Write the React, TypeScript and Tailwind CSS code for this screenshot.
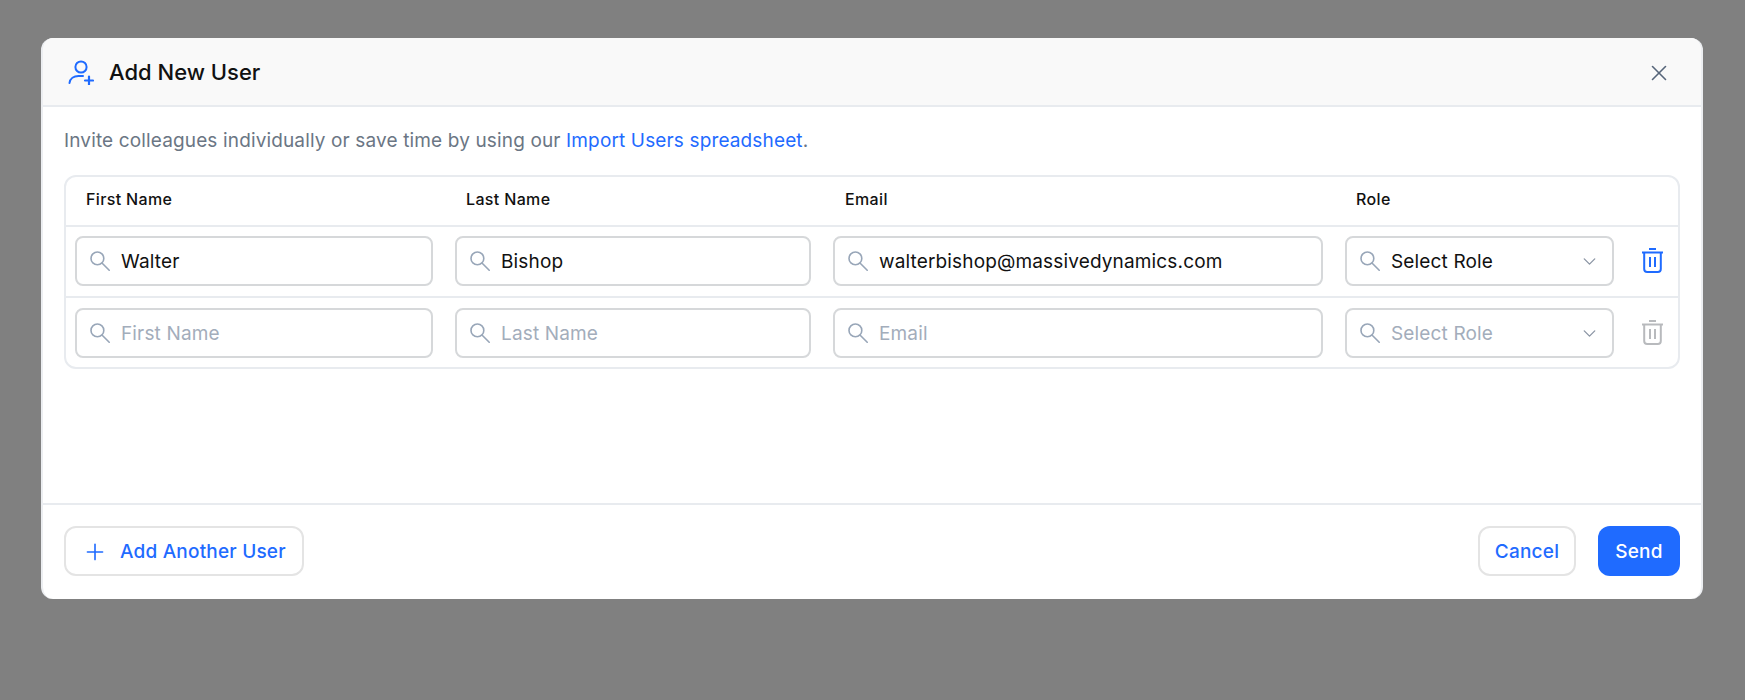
import { ChevronDown, Plus, X } from "lucide-react";

function SearchIcon() {
  return (
    <svg className="w-[20px] h-[20px] shrink-0 text-[#98a6b8]" viewBox="0 0 20 20" fill="none" stroke="currentColor" strokeWidth={1.6} strokeLinecap="round">
      <circle cx="7.4" cy="7.4" r="6.4" />
      <path d="M12.2 12.2L19.2 19.2" />
    </svg>
  );
}

function TrashIcon({ className }: { className: string }) {
  return (
    <svg className={`w-[21px] h-[25px] shrink-0 mt-[12px] ${className}`} viewBox="0 0 21 25" fill="none" stroke="currentColor" strokeWidth={2}>
      <path d="M7 1h7" />
      <path d="M0 4.500h21" />
      <path d="M2.200 4.500v16.500a3 3 0 0 0 3 3h10.600a3 3 0 0 0 3-3V4.500" />
      <path d="M8 9v10M13 9v10" />
    </svg>
  );
}

function UserAddIcon() {
  return (
    <svg className="w-[26px] h-[25px] text-[#1f6bff]" viewBox="0 0 26 25" fill="none" stroke="currentColor" strokeWidth={2} strokeLinecap="round">
      <circle cx="13" cy="7" r="5.600" />
      <path d="M1.500 23C2 18.500 6 16 10.500 16H15" />
      <path d="M17 20.500H25M21 16.500V24.500" strokeWidth={2.200} />
    </svg>
  );
}

function Field({ value, placeholder, width, select }: { value?: string; placeholder: string; width: string; select?: boolean }) {
  return (
    <div className={`${width} h-[50px] shrink-0 flex items-center rounded-lg border-2 border-[#d6d8da] pl-[13px] pr-[12px]`}>
      <SearchIcon />
      <span className={`ml-[11px] text-[19px] tracking-[0.15px] leading-none ${value ? "text-[#111111]" : "text-[#a3adbb]"}`}>{value ?? placeholder}</span>
      {select && <ChevronDown className="ml-auto w-[21px] h-[21px] text-[#8a94a3]" strokeWidth={1.5} />}
    </div>
  );
}

function Row({ values, active }: { values: string[]; active?: boolean }) {
  return (
    <div className={`h-[71px] flex items-start pl-[9px] border-t-2 border-[#e8ebef] ${active ? "pt-[9px]" : "pt-[10px]"}`}>
      <Field value={values[0]} placeholder="First Name" width="w-[358px]" />
      <div className="ml-[22px]">
        <Field value={values[1]} placeholder="Last Name" width="w-[356px]" />
      </div>
      <div className="ml-[22px]">
        <Field value={values[2]} placeholder="Email" width="w-[490px]" />
      </div>
      <div className="ml-[22px]">
        <Field value={values[3]} placeholder="Select Role" width="w-[269px]" select />
      </div>
      <TrashIcon className={`ml-[28px] ${active ? "text-[#1f6bff]" : "text-[#b8babd]"}`} />
    </div>
  );
}

export default function App() {
  return (
    <div className="w-full h-[700px] bg-[#808080] pt-[38px] pl-[41px] font-['Inter',sans-serif]">
      <div className="w-[1662px] h-[561px] bg-white rounded-xl flex flex-col overflow-hidden border-l-2 border-r-2 border-[#eceef1]">
        <div className="h-[69px] shrink-0 bg-[#f9f9f9] border-b-2 border-[#e8ebef] flex items-center pl-[25px] pr-[29px] pt-[2px]">
          <UserAddIcon />
          <h1 className="ml-[15px] text-[22px] font-medium text-[#111111]">Add New User</h1>
          <X className="ml-auto w-[26px] h-[26px] text-[#56657a]" strokeWidth={1.5} />
        </div>
        <div className="flex-1 px-[21px]">
          <p className="mt-[22px] text-[19px] tracking-[0.14px] leading-[24px] text-[#6b7684]">
            Invite colleagues individually or save time by using our <span className="text-[#1f6bff]">Import Users spreadsheet</span>.
          </p>
          <div className="mt-[22px] h-[194px] border-2 border-[#e8ebef] rounded-xl">
            <div className="h-[48px] flex items-center pb-[4px] text-[16px] tracking-[0.35px] font-medium text-[#111111]">
              <span className="w-[380px] pl-[20px]">First Name</span>
              <span className="w-[380px] pl-[20px]">Last Name</span>
              <span className="w-[511px] pl-[19px]">Email</span>
              <span className="ml-[19px]">Role</span>
            </div>
            <Row values={["Walter", "Bishop", "walterbishop@massivedynamics.com", "Select Role"]} active />
            <Row values={[]} />
          </div>
        </div>
        <div className="h-[96px] shrink-0 border-t-2 border-[#e8ebef] flex items-center px-[21px] pb-[2px]">
          <button className="w-[240px] h-[50px] rounded-xl border-2 border-[#e4e4e4] flex items-center pl-[16px] pt-[2px] text-[#1f6bff] text-[19px] tracking-[0.2px] font-medium">
            <Plus className="w-[26px] h-[26px]" strokeWidth={1.5} />
            <span className="ml-[12px]">Add Another User</span>
          </button>
          <button className="ml-auto w-[98px] h-[50px] rounded-xl border-2 border-[#e4e4e4] pt-[2px] text-[#1f6bff] text-[19px] tracking-[0.2px] font-medium">Cancel</button>
          <button className="ml-[22px] w-[82px] h-[50px] rounded-xl bg-[#1f6bff] pt-[2px] text-white text-[19px] tracking-[0.2px] font-medium">Send</button>
        </div>
      </div>
    </div>
  );
}
